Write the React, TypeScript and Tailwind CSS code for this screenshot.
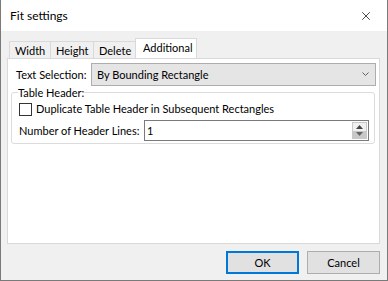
import { X } from "lucide-react";

const font = { fontFamily: 'Lato, "Liberation Sans", Arial, sans-serif' };

function Tab({ label, width, active }: { label: string; width: string; active?: boolean }) {
  if (active) {
    return (
      <div className={`relative z-10 -mb-px flex h-[20px] items-start border border-b-0 border-[#d9d9d9] bg-white pl-[7px] pt-[2px] ${width}`}>
        {label}
      </div>
    );
  }
  return (
    <div className={`mt-[3px] flex h-[17px] items-start border border-r-0 border-b-0 border-[#d9d9d9] bg-[#f0f0f0] pl-[5px] pt-[2px] ${width}`}>
      {label}
    </div>
  );
}

export default function App() {
  return (
    <div
      className="flex h-[281px] w-[388px] flex-col border-x border-b border-[#7a7a7a] bg-[#f0f0f0] text-[11px] leading-[14px] text-black whitespace-nowrap"
      style={font}
    >
      <div className="flex h-[31px] shrink-0 items-center justify-between bg-white pl-[9px] pr-[14px]">
        <span className="text-[12px]">Fit settings</span>
        <X size={14} strokeWidth={1.2} />
      </div>

      <div className="flex flex-1 flex-col pl-[6px] pr-[7px] pt-[7px]">
        <div className="flex pl-[2px]">
          <Tab label="Width" width="w-[41px]" />
          <Tab label="Height" width="w-[43px]" />
          <Tab label="Delete" width="w-[42px]" />
          <Tab label="Additional" width="w-[62px]" active />
        </div>

        <div className="h-[186px] border border-[#d9d9d9] bg-white px-[3px] pt-[4px]">
          <div className="flex items-center">
            <span className="ml-[5px] w-[75px] shrink-0">Text Selection:</span>
            <div className="flex h-[23px] flex-1 items-center justify-between border border-[#adadad] bg-[#e5e5e5] pl-[5px] pr-[6px]">
              <span>By Bounding Rectangle</span>
              <svg width="7" height="5" viewBox="0 0 7 5" className="text-[#606060]">
                <path d="M0.5 0.5 L3.5 3.5 L6.5 0.5" fill="none" stroke="currentColor" strokeWidth="1" />
              </svg>
            </div>
          </div>

          <fieldset className="mr-[1px] h-[58px] rounded-[3px] border border-[#dcdcdc] pl-[7px] pr-[5px]">
            <legend className="ml-[-1px] px-0 leading-[13px]">Table Header:</legend>
            <label className="mt-[3px] flex items-center">
              <span className="h-[13px] w-[13px] shrink-0 border border-[#333]" />
              <span className="ml-[4px]">Duplicate Table Header in Subsequent Rectangles</span>
            </label>
            <div className="mt-[4px] flex items-center">
              <span className="w-[125px] shrink-0">Number of Header Lines:</span>
              <div className="flex h-[21px] flex-1 items-center border border-[#7a7a7a] bg-white pl-[2px] pr-[1px]">
                <span className="flex-1">1</span>
                <div className="flex h-[17px] w-[15px] flex-col border border-[#c8c8c8]">
                  <div className="flex flex-1 items-center justify-center bg-[#f0f0f0]">
                    <svg width="7" height="4" viewBox="0 0 7 4">
                      <path d="M0 4 L3.5 0 L7 4 Z" fill="#444" />
                    </svg>
                  </div>
                  <div className="flex flex-1 items-center justify-center bg-[#c8c8c8]">
                    <svg width="7" height="4" viewBox="0 0 7 4">
                      <path d="M0 0 L3.5 4 L7 0 Z" fill="#666" />
                    </svg>
                  </div>
                </div>
              </div>
            </div>
          </fieldset>
        </div>

        <div className="mt-[7px] flex justify-end gap-[8px]">
          <button className="h-[23px] w-[73px] border-2 border-[#0078d7] bg-[#e1e1e1]">OK</button>
          <button className="h-[23px] w-[73px] border border-[#adadad] bg-[#e1e1e1]">Cancel</button>
        </div>
      </div>
    </div>
  );
}
